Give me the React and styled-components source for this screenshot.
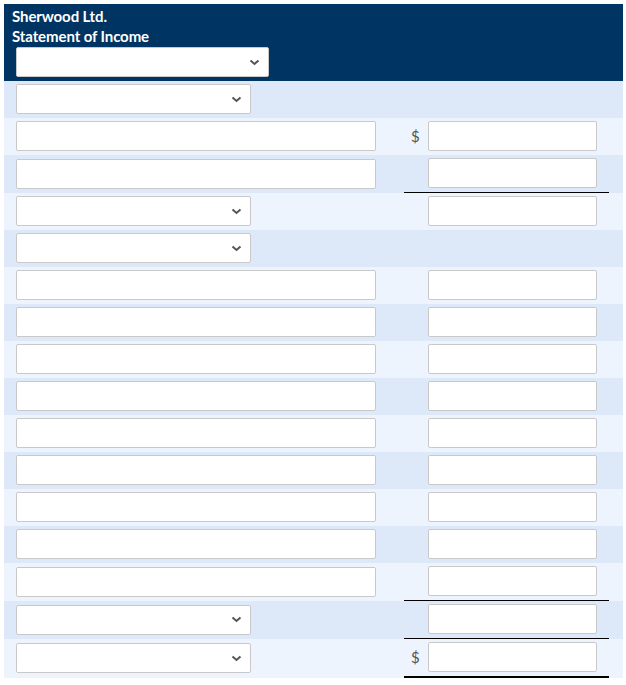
import React from "react";
import styled, { createGlobalStyle } from "styled-components";

const GlobalStyle = createGlobalStyle`
  body {
    margin: 0;
    background: #ffffff;
    font-family: Lato, "Open Sans", "Liberation Sans", sans-serif;
  }
`;

const Page = styled.div`
  padding: 4px 3px 4px 4px;
`;

const Header = styled.div`
  background-color: #003462;
  color: #ffffff;
  padding: 2px 8px 4px 8px;
`;

const Title = styled.div`
  font-size: 15px;
  font-weight: 700;
  line-height: 20px;
  letter-spacing: -0.1px;
`;

const HeaderSelect = styled.div`
  margin: 1px 0 0 4px;
`;

const Row = styled.div`
  display: flex;
  align-items: stretch;
  padding-left: 12px;
  background-color: ${(p) => (p.$dark ? "#dde8f8" : "#edf4fd")};
`;

const LeftCell = styled.div`
  width: 388px;
  display: flex;
  align-items: center;
  padding: 3px 0 4px;
`;

const RightCell = styled.div`
  width: 205px;
  display: flex;
  align-items: center;
  padding: 3px 0 4px;
  border-bottom: ${(p) => (p.$line ? `${p.$line}px solid #000` : "none")};
`;

const Dollar = styled.span`
  width: 24px;
  padding-left: 7px;
  box-sizing: border-box;
  font-size: 15px;
  color: #555;
`;

const Box = styled.div`
  box-sizing: border-box;
  height: 30px;
  width: ${(p) => p.$w}px;
  background: #ffffff;
  border: 1px solid #c9c9c9;
  border-radius: 2px;
`;

const SelectBox = styled(Box)`
  display: flex;
  align-items: center;
  justify-content: flex-end;
  padding-right: 8px;
`;

const Chevron = () => (
  <svg width="11" height="7" viewBox="0 0 11 7">
    <path d="M1.5 1.5 L5.5 5 L9.5 1.5" fill="none" stroke="#555" strokeWidth="2" />
  </svg>
);

const Select = ({ w }) => (
  <SelectBox $w={w}>
    <Chevron />
  </SelectBox>
);

const rows = [
  { left: "select" },
  { left: "text", right: true, dollar: true },
  { left: "text", right: true, line: 1 },
  { left: "select", right: true },
  { left: "select" },
  ...Array.from({ length: 8 }, () => ({ left: "text", right: true })),
  { left: "text", right: true, line: 1 },
  { left: "select", right: true, line: 1 },
  { left: "select", right: true, dollar: true, line: 2 },
];

const App = () => (
  <Page>
    <GlobalStyle />
    <Header>
      <Title>Sherwood Ltd.</Title>
      <Title>Statement of Income</Title>
      <HeaderSelect>
        <Select w={253} />
      </HeaderSelect>
    </Header>
    {rows.map((r, i) => (
      <Row key={i} $dark={i % 2 === 0}>
        <LeftCell>
          {r.left === "select" ? <Select w={235} /> : <Box $w={360} />}
        </LeftCell>
        {r.right && (
          <RightCell $line={r.line}>
            <Dollar>{r.dollar ? "$" : ""}</Dollar>
            <Box $w={169} />
          </RightCell>
        )}
      </Row>
    ))}
  </Page>
);

export default App;
